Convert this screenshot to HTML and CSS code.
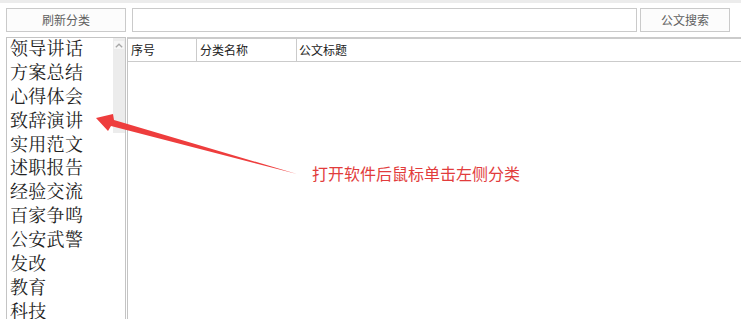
FILE: index.html
```html
<!DOCTYPE html>
<html lang="zh">
<head>
<meta charset="utf-8">
<title>公文</title>
<link rel="stylesheet" href="styles.css">
</head>
<body>
<div class="app">
  <div class="toolbar">
    <button class="btn btn-refresh">刷新分类</button>
    <input class="search" type="text">
    <button class="btn btn-search">公文搜索</button>
  </div>
  <div class="main">
    <div class="catlist">
      <ul class="items">
        <li>领导讲话</li>
        <li>方案总结</li>
        <li>心得体会</li>
        <li>致辞演讲</li>
        <li>实用范文</li>
        <li>述职报告</li>
        <li>经验交流</li>
        <li>百家争鸣</li>
        <li>公安武警</li>
        <li>发改</li>
        <li>教育</li>
        <li>科技</li>
      </ul>
      <div class="scrollbar">
        <div class="thumb">
          <div class="arrow">
            <svg width="8" height="5" viewBox="0 0 8 5"><path d="M0.8 4.3 L4 1.2 L7.2 4.3" fill="none" stroke="#a8a8a8" stroke-width="1.3"/></svg>
          </div>
        </div>
      </div>
    </div>
    <div class="grid">
      <div class="head">
        <div class="col c1">序号</div>
        <div class="col c2">分类名称</div>
        <div class="col c3">公文标题</div>
      </div>
    </div>
  </div>
  <svg class="annot-arrow" width="741" height="319" viewBox="0 0 741 319">
    <polygon points="96,118 113,114 114,120 297,174 111,126 108,131" fill="#ee3d3d"/>
  </svg>
  <div class="annot-text">打开软件后鼠标单击左侧分类</div>
</div>
</body>
</html>
```
FILE: styles.css
```css
html, body {
  margin: 0;
  padding: 0;
  background: #fff;
}
body {
  font-family: "Noto Sans CJK SC", "Noto Sans", sans-serif;
  overflow: hidden;
}
.app {
  position: relative;
  width: 741px;
  height: 319px;
  border-top: 3px solid #ececec;
  box-sizing: border-box;
  overflow: hidden;
}
.toolbar {
  display: flex;
  gap: 6px;
  padding: 5px 11px 0 6px;
  height: 24px;
}
.btn {
  height: 24px;
  box-sizing: border-box;
  border: 1px solid #cacaca;
  background: #fcfcfc;
  color: #606060;
  font-family: "Noto Sans CJK SC", sans-serif;
  font-size: 12px;
  padding: 0;
  line-height: 20px;
}
.btn-refresh { width: 120px; }
.btn-search { width: 90px; margin-left: -3px; }
.search {
  flex: 1;
  height: 24px;
  box-sizing: border-box;
  border: 1px solid #cacaca;
  background: #fff;
  margin: 0;
  padding: 0 4px;
  min-width: 0;
}
.main {
  display: flex;
  gap: 1px;
  margin-top: 5px;
  padding-left: 6px;
  height: 282px;
}
.catlist {
  width: 120px;
  box-sizing: border-box;
  border: 1px solid #c4c4c4;
  border-bottom: none;
  display: flex;
  overflow: hidden;
}
.items {
  flex: 1;
  list-style: none;
  margin: 0;
  padding: 0 0 0 3px;
  font-family: "Noto Serif CJK SC", "AR PL UMing CN", "Liberation Serif", serif;
  font-size: 18px;
  line-height: 18px;
  color: #222;
  letter-spacing: 0.3px;
  white-space: nowrap;
}
.items li {
  height: 18px;
  padding-bottom: 5.9px;
}
.scrollbar {
  width: 12px;
  background: #fff;
}
.thumb {
  height: 92px;
  background: #ececec;
  padding-top: 3px;
}
.arrow {
  height: 8px;
  margin: 0 1px;
  background: #f6f6f6;
  display: flex;
  align-items: center;
  justify-content: center;
}
.arrow svg { display: block; }
.grid {
  flex: 1;
  border-left: 1px solid #c4c4c4;
  border-top: 2px solid #cbcbcb;
}
.head {
  display: flex;
  height: 22px;
  border-bottom: 1px solid #cbcbcb;
  font-size: 12px;
  color: #222;
  line-height: 22px;
}
.col {
  box-sizing: border-box;
  padding-left: 3px;
  white-space: nowrap;
}
.c1 { width: 69px; border-right: 1px solid #cbcbcb; }
.c2 { width: 100px; border-right: 1px solid #cbcbcb; padding-left: 3px; }
.c3 { flex: 1; padding-left: 2px; }
.annot-arrow {
  position: absolute;
  left: 0;
  top: -3px;
  pointer-events: none;
}
.annot-text {
  position: absolute;
  left: 312px;
  top: 160px;
  font-size: 16px;
  line-height: 20px;
  color: #e23c3c;
  white-space: nowrap;
}
```
